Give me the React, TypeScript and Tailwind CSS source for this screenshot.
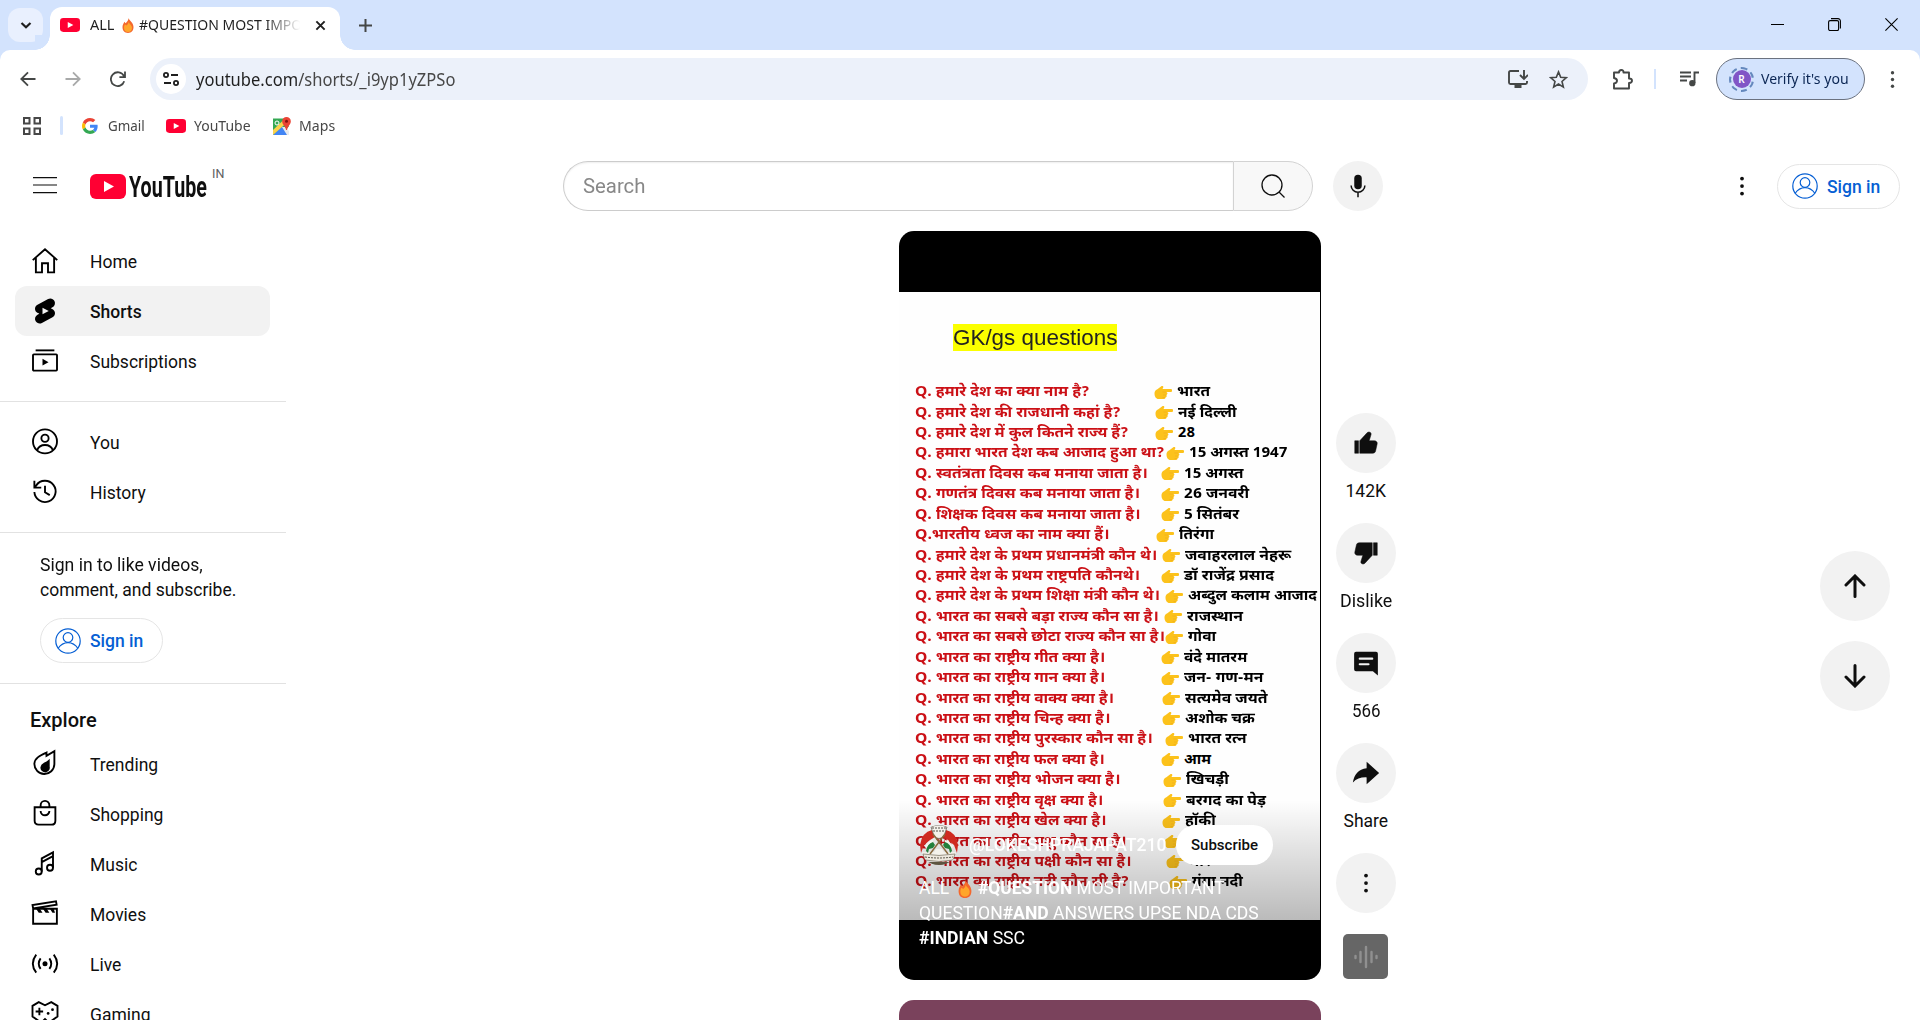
import { useLayoutEffect, useRef, useState, type ReactNode } from "react";

const UI = "font-['Noto_Sans','Open_Sans',sans-serif]";

/* Single line of text stretched or squeezed horizontally to a given width. */
function Fit({ w, className = "", children }: { w: number; className?: string; children: ReactNode }) {
  const ref = useRef<HTMLSpanElement>(null);
  const [scale, setScale] = useState(1);
  useLayoutEffect(() => {
    if (ref.current && ref.current.offsetWidth) setScale(w / ref.current.offsetWidth);
  }, [w]);
  return (
    <span className={`block shrink-0 whitespace-nowrap ${className}`} style={{ width: w }}>
      <span ref={ref} className="inline-block origin-left" style={{ transform: `scaleX(${scale})` }}>
        {children}
      </span>
    </span>
  );
}

function Svg({ children, className = "size-[30px]", box = "0 0 24 24", sw = 1.2 }: { children: ReactNode; className?: string; box?: string; sw?: number }) {
  return (
    <svg viewBox={box} className={`block shrink-0 ${className}`} fill="none" stroke="currentColor" strokeWidth={sw}>
      {children}
    </svg>
  );
}

const Flame = ({ className }: { className: string }) => (
  <svg viewBox="0 0 24 28" preserveAspectRatio="none" className={`inline-block shrink-0 ${className}`}>
    <path d="M13 0c1 5 10 8 10 17 0 7-4 11-11 11S1 24 1 17c0-4 2-7 4-10l2 3c3-3 6-5 6-10z" fill="#f4682d" />
    <path d="M13 7c1 4 7 6 7 11 0 5-3 8-8 8s-8-3-8-8c0-3 1-5 2-6l3 2c2-2 4-3 4-7z" fill="#ffa62b" />
  </svg>
);

const Hand = () => (
  <svg viewBox="0 0 36 30" className="block h-[15px] w-[18px] shrink-0">
    <path d="M1 17c0-4 2-7 5-8l8-6c3-2 6 0 4 3l-1 2h17c3 0 3 6 0 6h-9c3 2 2 5 0 6 1 3 0 5-2 5 0 2-2 3-5 3H9c-5 0-8-5-8-11z" fill="#fcc21b" />
    <path d="M24 14h-7M24 20h-6M22 25h-5" stroke="#eead1c" strokeWidth="1.3" fill="none" />
  </svg>
);

const YtBadge = ({ className }: { className: string }) => (
  <svg viewBox="0 0 36 25" className={`block shrink-0 ${className}`}>
    <rect width="36" height="25" rx="6" fill="#ff0033" />
    <path d="M14 7l10 5.5L14 18z" fill="#fff" />
  </svg>
);

const Dots = ({ className, color = "#0f0f0f" }: { className: string; color?: string }) => (
  <svg viewBox="0 0 24 24" className={`block shrink-0 ${className}`} fill={color}>
    <circle cx="12" cy="6" r="1.5" /><circle cx="12" cy="12" r="1.5" /><circle cx="12" cy="18" r="1.5" />
  </svg>
);

function TabStrip() {
  return (
    <div className="flex h-[50px] items-end bg-[#d3e3fd]">
      <div className="mb-2 ml-2 flex h-[34px] w-[35px] items-center justify-center rounded-xl bg-[#e9f0fe]">
        <Svg className="size-3" box="0 0 12 12" sw={2.2}><path d="M1.5 4L6 8.300 10.500 4" stroke="#1f1f1f" /></Svg>
      </div>
      <div className="-ml-[8px] size-[15px] bg-[radial-gradient(circle_at_0_0,#d3e3fd_14.5px,#fff_15px)]" />
      <div className="flex h-[43px] w-[290px] items-center rounded-t-[12px] bg-white pb-[7px] pl-[10px]">
        <YtBadge className="h-[14px] w-5" />
        <div className={`ml-[10px] flex h-6 w-[210px] items-center overflow-hidden text-[14.5px] text-[#1f1f1f] [mask-image:linear-gradient(to_right,#000_175px,transparent_210px)] ${UI}`}>
          <Fit w={24}>ALL</Fit>
          <Flame className="mx-[8px] h-[15px] w-[12px]" />
          <Fit w={206} className="-ml-[3px]">#QUESTION MOST IMPORTANT</Fit>
        </div>
        <Svg className="ml-[15px] size-[11px]" box="0 0 12 12" sw={2.1}><path d="M1.500 1.500l9 9m0-9l-9 9" stroke="#1f1f1f" /></Svg>
      </div>
      <div className="size-[15px] bg-[radial-gradient(circle_at_100%_0,#d3e3fd_14.5px,#fff_15px)]" />
      <Svg className="mb-[18px] ml-1 size-[13px]" box="0 0 13 13" sw={2}><path d="M6.500 0v13M0 6.500h13" stroke="#444746" /></Svg>
      <div className="mb-[19px] ml-auto mr-[22px] flex items-center gap-[44px] text-black">
        <Svg className="size-[13px]" box="0 0 13 13" sw={1}><path d="M0 6.500h13" /></Svg>
        <Svg className="size-[13px]" box="0 0 13 13" sw={1.1}><rect x=".6" y="2.600" width="10" height="10" rx="1.500" /><path d="M3 .6h7a2.400 2.400 0 012.400 2.400v7.500" /></Svg>
        <Svg className="size-[13px]" box="0 0 13 13" sw={1.1}><path d="M.4.4l12.200 12.200m0-12.200L.4 12.600" /></Svg>
      </div>
    </div>
  );
}

function Toolbar() {
  return (
    <div className="bg-[#d3e3fd]">
      <div className="flex h-[58px] items-center rounded-t-[10px] bg-white text-[#444746]">
        <Svg className="ml-5 size-4" box="0 0 16 16" sw={1.8}><path d="M15.500 8H1.800M8 1.300L1.300 8 8 14.700" /></Svg>
        <Svg className="ml-[29px] size-4 text-[#a8a9a9]" box="0 0 16 16" sw={1.8}><path d="M.5 8h13.700M8 1.300L14.700 8 8 14.700" /></Svg>
        <Svg className="ml-[29px] size-4" box="0 0 16 16" sw={1.8}><path d="M14.200 10.200A6.800 6.800 0 112.900 3.400 6.800 6.800 0 0114 5.200M15 .6v5.600H9.400" /></Svg>
        <div className="ml-[24px] flex h-[42px] w-[1438px] items-center rounded-full bg-[#ecf1fa] pl-[6px]">
          <div className="flex size-[30px] items-center justify-center rounded-full bg-white">
            <Svg className="size-4 text-[#1f1f1f]" box="0 0 16 16" sw={1.8}><circle cx="3" cy="4" r="2.100" /><path d="M8 4h7M1 12h7" /><circle cx="13" cy="12" r="2.100" /></Svg>
          </div>
          <Fit w={259} className={`ml-[10px] text-[18px] leading-6 ${UI}`}>
            <span className="text-[#1f1f1f]">youtube.com</span><span className="text-[#474747]">/shorts/_i9yp1yZPSo</span>
          </Fit>
          <Svg className="ml-[1053px] h-[18px] w-5" box="0 0 20 18" sw={1.9}><path d="M11 1H2.500Q1 1 1 2.500v10Q1 14 2.500 14h15q1.500 0 1.500-1.500V11M16 0v8.500M12 5l4 4 4-4" /><path d="M6.500 16.500h7" strokeWidth="3" /></Svg>
          <Svg className="ml-[21px] size-[19px]" box="0 0 20 20" sw={1.7}><path d="M10 2l2.300 5.600 6 .5-4.600 4 1.400 5.900-5.100-3.200L4.900 18l1.400-5.900-4.600-4 6-.5z" /></Svg>
        </div>
        <Svg className="ml-[24px] size-[21px]" box="0 0 21 21" sw={1.9}><path d="M2 3.500h5q0-2.500 2.300-2.500t2.200 2.500h5.500v6q3 0 3 2.200t-3 2.300v5.500H2v-5q3-.6 3-2.800T2 9z" strokeLinejoin="round" /></Svg>
        <div className="ml-[21px] h-5 w-0.5 bg-[#d3e3fd]" />
        <Svg className="ml-[24px] h-4 w-[19px]" box="0 0 19 16" sw={1.9}><path d="M0 1.500h11M0 5.500h11M0 9.500h7M14.500 12V1.500H19" /><circle cx="12.300" cy="12.200" r="2.200" fill="currentColor" /></Svg>
        <div className="ml-[17px] flex h-[42px] w-[149px] items-center rounded-full border border-[#6b7280] bg-[#d3e3fd] pl-[12px]">
          <div className="flex size-[25px] items-center justify-center rounded-full border-2 border-dashed border-[#6488bd]">
            <div className={`flex size-[18px] items-center justify-center rounded-full bg-[#8155c6] text-[10px] font-semibold text-white ${UI}`}>R</div>
          </div>
          <Fit w={88} className={`-mt-[2px] ml-[7px] text-[15px] text-[#0b2654] ${UI}`}>Verify it's you</Fit>
        </div>
        <Dots className="ml-[14px] size-[27px]" color="#444746" />
      </div>
    </div>
  );
}

function Bookmarks() {
  return (
    <div className={`flex h-[43px] items-center pb-[8px] text-[14.5px] text-[#474747] ${UI}`}>
      <Svg className="ml-[23px] size-[18px]" box="0 0 18 18" sw={2}><path d="M1 1h5.500v5.500H1zM11.500 1H17v5.500h-5.500zM1 11.500h5.500V17H1zM11.500 11.500H17V17h-5.500z" /></Svg>
      <div className="ml-[19px] h-[19px] w-[3px] rounded bg-[#d3e3fd]" />
      <svg viewBox="0 0 48 48" className="ml-[19px] size-[16px]">
        <path fill="#EA4335" d="M24 9.500c3.540 0 6.710 1.220 9.210 3.600l6.850-6.850C35.900 2.380 30.470 0 24 0 14.620 0 6.510 5.380 2.560 13.220l7.980 6.190C12.430 13.720 17.740 9.500 24 9.500z" />
        <path fill="#4285F4" d="M46.980 24.550c0-1.570-.15-3.090-.38-4.550H24v9.020h12.940c-.58 2.960-2.260 5.480-4.780 7.180l7.730 6c4.510-4.180 7.090-10.360 7.090-17.650z" />
        <path fill="#FBBC05" d="M10.530 28.590c-.48-1.450-.76-2.990-.76-4.590s.27-3.140.76-4.590l-7.980-6.190C.92 16.460 0 20.120 0 24c0 3.880.92 7.540 2.560 10.780l7.970-6.190z" />
        <path fill="#34A853" d="M24 48c6.480 0 11.930-2.130 15.890-5.810l-7.730-6c-2.150 1.450-4.920 2.300-8.160 2.300-6.260 0-11.570-4.220-13.470-9.910l-7.980 6.190C6.510 42.620 14.620 48 24 48z" />
      </svg>
      <Fit w={37} className="ml-[10px]">Gmail</Fit>
      <YtBadge className="ml-[21px] h-[14px] w-5" />
      <Fit w={57} className="ml-[8px]">YouTube</Fit>
      <svg viewBox="0 0 18 18" className="ml-[22px] size-[18px]">
        <path d="M0 1.500h12L16 9 9 18H0z" fill="#34a853" /><path d="M0 18L9.500 9 16 18z" fill="#4285f4" /><path d="M0 13L11 2.500l3 3L0 18z" fill="#fbd14b" />
        <path d="M9 10l3 0 4 4v4h-2z" fill="#e8eaed" /><circle cx="4" cy="6" r="2" fill="none" stroke="#fff" strokeWidth="1" />
        <path d="M13.500 0a4.300 4.300 0 014.300 4.400c0 3.100-3 4.300-3.800 8.600h-.9c-.8-4.300-3.900-5.500-3.900-8.600A4.300 4.300 0 0113.500 0z" fill="#ea4335" /><circle cx="13.500" cy="4.300" r="1.500" fill="#811411" />
      </svg>
      <Fit w={36} className="ml-[8px]">Maps</Fit>
    </div>
  );
}

function SignIn() {
  return (
    <div className="flex h-[45px] w-[123px] items-center rounded-full border border-[#e5e5e5] pl-[14px] text-[#065fd4]">
      <Svg className="size-[26px]" box="0 0 26 26" sw={1.2}><circle cx="13" cy="13" r="12.200" /><circle cx="13" cy="9.500" r="4.800" /><path d="M3 20.500q4-5.800 10-5.800t10 5.800" /></Svg>
      <Fit w={53} className="ml-[9px] pt-[2px] text-[17.5px] font-medium">Sign in</Fit>
    </div>
  );
}

function Masthead() {
  return (
    <header className="flex h-[70px] items-center">
      <Svg className="mb-[2px] ml-[33px] h-[18px] w-6" box="0 0 24 18" sw={1.2}><path d="M0 1.600h24M0 9h24M0 16.600h24" /></Svg>
      <YtBadge className="ml-[33px] h-[25px] w-9" />
      <Fit w={78} className="ml-[3px] h-[36px] text-[30px] font-bold leading-[38px] text-[#0f0f0f]">YouTube</Fit>
      <Fit w={12} className="mb-[25px] ml-[5px] text-[12.5px] leading-4 text-[#606060]">IN</Fit>
      <div className="ml-[339px] flex h-[50px] w-[670px] items-center rounded-l-full border border-r-0 border-[#ccc] pl-[19px] text-[20px] text-[#888] shadow-[inset_0_1px_2px_#eee]">
        <Fit w={62}>Search</Fit>
      </div>
      <div className="flex h-[50px] w-20 items-center justify-center rounded-r-full border border-[#d3d3d3] bg-[#f8f8f8]">
        <Svg className="size-[24px]" box="0 0 24 24" sw={1.3}><circle cx="11" cy="11" r="10" /><path d="M18 18l5.500 5.500" /></Svg>
      </div>
      <div className="ml-5 flex size-[50px] items-center justify-center rounded-full bg-[#f2f2f2] text-[#0f0f0f]">
        <Svg className="size-[30px]"><path d="M12 3a3 3 0 013 3v5.500a3 3 0 01-6 0V6a3 3 0 013-3z" fill="currentColor" stroke="none" /><path d="M6.500 11.500a5.500 5.500 0 0011 0M12 17v4" /></Svg>
      </div>
      <Dots className="ml-[344px] size-[30px]" />
      <div className="ml-5"><SignIn /></div>
    </header>
  );
}

const icons: Record<string, ReactNode> = {
  Home: <path d="M2.200 11.300L12 2.600l9.800 8.700M4.700 9.500v11.600h4.900v-7.300h4.800v7.300h4.900V9.500" />,
  Shorts: <path stroke="none" fill="currentColor" fillRule="evenodd" d="M10 14.650v-5.300L15 12l-5 2.650zm7.770-4.330-1.200-.5L18 9.060c1.840-.96 2.530-3.230 1.560-5.060s-3.240-2.530-5.070-1.560L6 6.940c-1.290.68-2.070 2.040-2 3.490.07 1.420.93 2.670 2.220 3.250.03.01 1.200.5 1.200.5L6 14.930c-1.830.97-2.530 3.240-1.560 5.070.97 1.830 3.240 2.530 5.070 1.560l8.500-4.500c1.290-.68 2.060-2.040 1.990-3.490-.07-1.420-.94-2.680-2.230-3.250z" />,
  Subscriptions: <><rect x="2.400" y="6.700" width="19.200" height="13" rx=".7" /><path d="M4.500 3.500h15" /><path d="M10 10.200v5.400l4.800-2.700z" fill="currentColor" stroke="none" /></>,
  You: <><circle cx="12" cy="11.500" r="9.600" /><circle cx="12" cy="9" r="2.900" /><path d="M5.700 18.600q1.600-4.200 6.300-4.200t6.300 4.200" /></>,
  History: <><path d="M3.500 12a8.500 8.500 0 101.500-5.300L3.500 8.500M3.500 3v5.500H9M12 7v5.200l3.800 2.300" /></>,
  Trending: <><path d="M19.500 1.700v10.500a8 8 0 11-16-.4C3.800 7 8.500 5 13.200 2.800V5.500z" /><path d="M15 9.500v4.700a3 3 0 11-5.800 0c.3-2.200 3-2.300 5.800-4.700z" fill="currentColor" /></>,
  Shopping: <path d="M3.700 6.600h16.600v10.700q0 3.200-3.200 3.200H6.900q-3.200 0-3.200-3.200zM8.500 6.500V5a3.500 3.500 0 017 0v1.500M8.500 9.500a3.500 3.500 0 007 0" />,
  Music: <><circle cx="7" cy="18" r="2.400" /><circle cx="16" cy="15" r="2.400" /><path d="M9.400 18V7.500l9-4.800V15M9.400 10.500l9-4.800" /></>,
  Movies: <><path d="M2.500 7.800h19v12H2.500zM2.500 7.500L2 4.800l18.800-3 .5 2.700z" /><path d="M5 8l2 3h3L8 8zm5.500 0l2 3h3l-2-3zm5.500 0l2 3h2l-1-3z" fill="currentColor" stroke="none" /></>,
  Live: <><circle cx="12" cy="11.700" r="2" fill="currentColor" stroke="none" /><path d="M8.500 7.500q-3 4.200 0 8.400M15.500 7.500q3 4.200 0 8.400M5 4.500q-5.500 7.200 0 14.400M19 4.500q5.500 7.200 0 14.400" /></>,
  Gaming: <><path d="M7 2.500L12 5l5-2.500 5 3v8.500l-7 5-3-3-3 3-7-5V5.500zM7.500 7v6M4.500 10h6" /><circle cx="18" cy="8.500" r="1.100" fill="currentColor" stroke="none" /><circle cx="14.500" cy="11.500" r="1.100" fill="currentColor" stroke="none" /></>,
};

function NavItem({ name, w, active = false }: { name: string; w: number; active?: boolean }) {
  return (
    <div className={`ml-[15px] flex h-[50px] w-[255px] items-center rounded-[12px] pl-[15px] ${active ? "bg-[#f2f2f2] font-medium" : ""}`}>
      <Svg sw={1.5} className="size-[30px] text-black">{icons[name]}</Svg>
      <Fit w={w} className="ml-[30px] pt-[2px]">{name}</Fit>
    </div>
  );
}

const explore: [string, number][] = [["Trending", 68], ["Shopping", 73], ["Music", 47], ["Movies", 56], ["Live", 31], ["Gaming", 61]];

function Sidebar() {
  return (
    <nav className="w-[286px] shrink-0 pt-[15px] text-[17.5px] text-[#0f0f0f]">
      <NavItem name="Home" w={47} />
      <NavItem name="Shorts" w={52} active />
      <NavItem name="Subscriptions" w={107} />
      <div className="mt-[15px] h-px bg-[#e2e2e2]" />
      <div className="h-[15px]" />
      <NavItem name="You" w={30} />
      <NavItem name="History" w={56} />
      <div className="mt-[15px] h-px bg-[#e2e2e2]" />
      <div className="ml-10 pt-[20px] leading-[25px]">
        <Fit w={163}>Sign in to like videos,</Fit>
        <Fit w={196}>comment, and subscribe.</Fit>
      </div>
      <div className="ml-10 mt-[15px]"><SignIn /></div>
      <div className="mt-5 h-px bg-[#e2e2e2]" />
      <Fit w={67} className="ml-[30px] pb-[4px] pt-[21px] text-[20px] font-medium leading-[30px]">Explore</Fit>
      {explore.map(([n, w]) => <NavItem key={n} name={n} w={w} />)}
    </nav>
  );
}

/* question, question width, offset of the pointing hand, answer, answer width */
const rows: [string, number, number, string, number][] = [
  ["Q. हमारे देश का क्या नाम है?", 174, 239, "भारत", 33],
  ["Q. हमारे देश की राजधानी कहां है?", 206, 240, "नई दिल्ली", 59],
  ["Q. हमारे देश में कुल कितने राज्य हैं?", 214, 240, "28", 17],
  ["Q. हमारा भारत देश कब आजाद हुआ था?", 250, 251, "15 अगस्त 1947", 99],
  ["Q. स्वतंत्रता दिवस कब मनाया जाता है।", 233, 246, "15 अगस्त", 60],
  ["Q. गणतंत्र दिवस कब मनाया जाता है।", 225, 246, "26 जनवरी", 65],
  ["Q. शिक्षक दिवस कब मनाया जाता है।", 225, 246, "5 सितंबर", 55],
  ["Q.भारतीय ध्वज का नाम क्या हैं।", 194, 241, "तिरंगा", 35],
  ["Q. हमारे देश के प्रथम प्रधानमंत्री कौन थे।", 242, 247, "जवाहरलाल नेहरू", 106],
  ["Q. हमारे देश के प्रथम राष्ट्रपति कौनथे।", 225, 246, "डॉ राजेंद्र प्रसाद", 90],
  ["Q. हमारे देश के प्रथम शिक्षा मंत्री कौन थे।", 245, 250, "अब्दुल कलाम आजाद", 129],
  ["Q. भारत का सबसे बड़ा राज्य कौन सा है।", 244, 249, "राजस्थान", 56],
  ["Q. भारत का सबसे छोटा राज्य कौन सा है।", 250, 250, "गोवा", 28],
  ["Q. भारत का राष्ट्रीय गीत क्या है।", 190, 246, "वंदे मातरम", 63],
  ["Q. भारत का राष्ट्रीय गान क्या है।", 190, 246, "जन- गण-मन", 79],
  ["Q. भारत का राष्ट्रीय वाक्य क्या है।", 199, 247, "सत्यमेव जयते", 82],
  ["Q. भारत का राष्ट्रीय चिन्ह क्या है।", 195, 247, "अशोक चक्र", 70],
  ["Q. भारत का राष्ट्रीय पुरस्कार कौन सा है।", 237, 250, "भारत रत्न", 59],
  ["Q. भारत का राष्ट्रीय फल क्या है।", 190, 246, "आम", 27],
  ["Q. भारत का राष्ट्रीय भोजन क्या है।", 205, 248, "खिचड़ी", 43],
  ["Q. भारत का राष्ट्रीय वृक्ष क्या है।", 188, 248, "बरगद का पेड़", 80],
  ["Q. भारत का राष्ट्रीय खेल क्या है।", 191, 247, "हॉकी", 31],
  ["Q. भारत का राष्ट्रीय पशु कौन सा है।", 211, 249, "बाघ", 22],
  ["Q. भारत का राष्ट्रीय पक्षी कौन सा है।", 216, 251, "मोर", 22],
  ["Q. भारत का राष्ट्रीय नदी कौन सी है?", 214, 254, "गंगा नदी", 51],
];

const Avatar = () => (
  <svg viewBox="0 0 40 40" className="size-10 shrink-0 overflow-hidden rounded-full">
    <path d="M3 27h34l-3 7H6z" fill="#f1efe8" />
    <path d="M1 20Q3 7 13 5l3 7-5 3-6 5-3 8zM39 20Q37 7 27 5l-3 7 5 3 6 5 3 8z" fill="#cf2a20" />
    <path d="M6 21q4-6 8-6v4l-6 6zM34 21q-4-6-8-6v4l6 6z" fill="#f5f5ee" />
    <path d="M7 26q1-7 7-9l2 3-2 3-4 1-1 4zM33 26q-1-7-7-9l-2 3 2 3 4 1 1 4z" fill="#23803b" />
    <path d="M12 2q8-4 16 0l-3 9q-5 5-10 0z" fill="#f3f1ea" stroke="#6d675c" strokeWidth=".8" />
    <path d="M13 3h14M14 6h12" stroke="#57524a" strokeDasharray="2 1" />
    <path d="M11 29L26 9M29 29L14 9" stroke="#8a6b3f" strokeWidth="1.5" />
    <path d="M17 24h6l3 5H14z" fill="#f5f3ec" />
    <path d="M4 29q16 3 32 0l-2 6q-14 3-28 0z" fill="#eee9df" stroke="#77705f" strokeWidth=".7" />
    <path d="M6 32q14 2 28 0" stroke="#5c564a" strokeDasharray="2 1" fill="none" />
    <path d="M7 37h26l-6 3H13z" fill="#5d5540" />
  </svg>
);

function Short() {
  return (
    <div className="relative h-[749px] w-[422px] overflow-hidden rounded-[15px] bg-black pt-[61px]">
      <div className="h-[628px] w-[421px] overflow-hidden bg-[#fefefe]">
        <div className="ml-[54px] mt-[32px] h-[27px] w-[164px] bg-[#fbff00] font-['Liberation_Sans',Arial,sans-serif] text-[22px] leading-[27px] text-[#222]">
          <Fit w={164}>GK/gs questions</Fit>
        </div>
        <div className="ml-[16px] mt-[31px] font-['Noto_Sans_Devanagari','Noto_Sans',Roboto,sans-serif] text-[15px] font-bold">
          {rows.map(([q, qw, hand, a, aw], i) => (
            <div key={i} className="flex h-[20.43px] items-center leading-5">
              <div className="shrink-0 pt-[2px]" style={{ width: hand }}><Fit w={qw} className="text-[#cb1016]">{q}</Fit></div>
              <Hand />
              <Fit w={aw} className="ml-[5px] pt-[2px] text-black">{a}</Fit>
            </div>
          ))}
        </div>
      </div>
      <div className="absolute inset-x-0 bottom-0 h-[180px] bg-linear-to-b from-transparent to-black/40 px-5 pt-[25px] text-[17.5px] text-white">
        <div className="flex items-center">
          <Avatar />
          <Fit w={197} className="ml-[10px] pt-px font-medium">@LOKESHPRAJAPAT210</Fit>
          <div className="ml-[10px] flex h-10 w-[97px] items-center justify-center rounded-full bg-white text-[15px] font-medium text-[#0f0f0f]"><Fit w={67}>Subscribe</Fit></div>
        </div>
        <div className="mt-[11px] leading-[25px]">
          <div className="flex h-[25px] items-center">
            <Fit w={30}>ALL</Fit><Flame className="ml-[9px] mr-[8px] h-[18px] w-[14px]" />
            <Fit w={247} className="-ml-0.5">
              <b>#QUESTION</b> MOST IMPORTANT</Fit>
          </div>
          <Fit w={340}>QUESTION<b>#AND</b> ANSWERS UPSE NDA CDS</Fit>
          <Fit w={106}><b>#INDIAN</b> SSC</Fit>
        </div>
      </div>
    </div>
  );
}

const thumb = <path d="M3 11h3v10H3zM18.770 11h-4.230l1.520-4.940C16.380 5.030 15.540 4 14.380 4c-.58 0-1.140.24-1.520.65L7 11v10h10.430c1.060 0 1.980-.67 2.190-1.610l1.340-6c.27-1.240-.78-2.390-2.190-2.390z" fill="currentColor" stroke="currentColor" strokeWidth=".4" strokeLinejoin="round" />;

function Action({ label, w = 0, children }: { label?: string; w?: number; children: ReactNode }) {
  return (
    <div className="flex h-[110px] flex-col items-center">
      <div className="flex size-[60px] items-center justify-center rounded-full bg-[#f2f2f2]">{children}</div>
      {label && <Fit w={w} className="mt-[6px] text-[17.5px] leading-[25px]">{label}</Fit>}
    </div>
  );
}

function Actions() {
  return (
    <div className="ml-[15px] w-[60px] pt-[182px] text-[#0f0f0f]">
      <Action label="142K" w={41}><Svg className="mb-[3px] size-[30px]">{thumb}</Svg></Action>
      <Action label="Dislike" w={52}><Svg className="mt-px size-[30px] rotate-180">{thumb}</Svg></Action>
      <Action label="566" w={29}><Svg><path d="M4 3h16q1.500 0 1.500 1.500V22l-4-3.500H4q-1.500 0-1.500-1.500V4.500Q2.500 3 4 3z" fill="currentColor" stroke="none" /><path d="M7 8.500h10M7 13h7" stroke="#f2f2f2" strokeWidth="1.700" strokeLinecap="round" /></Svg></Action>
      <Action label="Share" w={45}><Svg><path d="M12.500 3L22.500 12l-10 9v-5.500C8 15.300 4.500 16.500 1.500 19.500 2.500 13.500 6 8.800 12.500 8.200z" fill="currentColor" stroke="none" /></Svg></Action>
      <div className="flex size-[60px] items-center justify-center rounded-full bg-[#f2f2f2]"><Dots className="size-[30px]" /></div>
      <div className="ml-[7px] mt-[21px] flex size-[45px] items-center justify-center rounded-[5px] bg-[#666]">
        <Svg className="h-6 w-6 text-[#909090]" sw={2.4}><path d="M1.500 11v2M6.500 7v10M12 2v20M17.500 7v10M22.500 11v2" strokeLinecap="round" /></Svg>
      </div>
    </div>
  );
}

export default function App() {
  return (
    <div className="flex h-[1020px] w-[1920px] flex-col overflow-hidden bg-white font-[Roboto,sans-serif] text-[#0f0f0f]">
      <TabStrip />
      <Toolbar />
      <Bookmarks />
      <Masthead />
      <div className="flex min-h-0 flex-1">
        <Sidebar />
        <main className="ml-[613px] pt-[10px]">
          <Short />
          <div className="mt-5 h-[749px] w-[422px] rounded-[15px] bg-[#7a425c]" />
        </main>
        <div className="pt-[10px]"><Actions /></div>
        <div className="ml-auto mr-[30px] flex flex-col gap-5 pt-[330px]">
          {[false, true].map((down) => (
            <div key={String(down)} className={`flex size-[70px] items-center justify-center rounded-full bg-[#f2f2f2] ${down ? "rotate-180" : ""}`}>
              <Svg className="size-[24px]" sw={3}><path d="M12 22.500V2.500M3 11L12 2l9 9" strokeLinecap="round" /></Svg>
            </div>
          ))}
        </div>
      </div>
    </div>
  );
}
